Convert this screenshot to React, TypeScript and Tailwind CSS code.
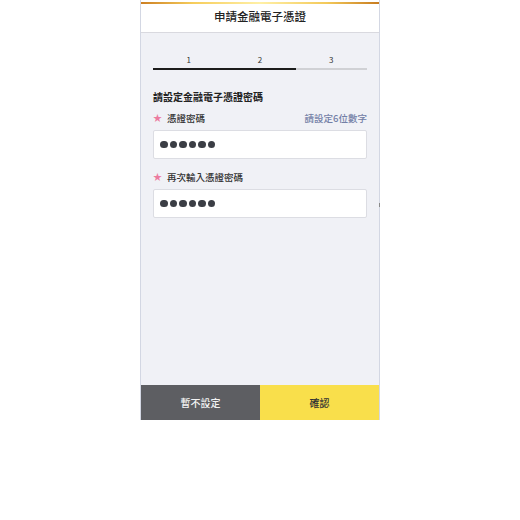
import React from 'react';

const font = { fontFamily: '"Noto Sans CJK TC", "Noto Sans", sans-serif' };

const Dots: React.FC = () => (
    <div className="flex gap-[2px]">
        {[0, 1, 2, 3, 4, 5].map((i) => (
            <span key={i} className="block w-[7.5px] h-[7.5px] rounded-full bg-[#3b3e45]" />
        ))}
    </div>
);

const PasswordField: React.FC<{ label: string; hint?: string; className?: string }> = ({ label, hint, className }) => (
    <div className={className}>
        <div className="flex items-center justify-between h-[14px] text-[9.5px] leading-[14px]">
            <div className="flex items-center gap-[5px] text-[#333] font-medium">
                <span className="text-[#ec7ba0] text-[9px]">★</span>
                <span>{label}</span>
            </div>
            {hint && <span className="text-[#7380a6] font-medium">{hint}</span>}
        </div>
        <div className="mt-[5px] h-[29px] bg-white border border-[#dcdde3] rounded-[2px] flex items-center pl-[6px]">
            <Dots />
        </div>
    </div>
);

export default function App() {
    return (
        <div className="w-[520px] h-[520px] bg-white flex justify-center" style={font}>
            <div className="relative w-[240px] h-[420px] flex flex-col bg-[#f0f1f6] border-x border-[#d3d7e3]">
                {/* header */}
                <div className="bg-white pt-[2px] border-b border-[#d9d9df]">
                    <div className="h-[2px] bg-[linear-gradient(90deg,#cc7f22,#f6cd5c_22%,#fff0a6_50%,#f3c95a_78%,#c77b1f)]" />
                    <div className="h-[28px] pb-[2px] flex items-center justify-center text-[11.5px] font-medium text-[#222]">
                        申請金融電子憑證
                    </div>
                </div>

                <div className="flex-1 px-[12px]">
                    {/* steps */}
                    <div className="pt-[22px]">
                        <div className="grid grid-cols-3 h-[10px] text-[8px] leading-[10px] text-[#333]">
                            <span className="text-center">1</span>
                            <span className="text-center">2</span>
                            <span className="text-center">3</span>
                        </div>
                        <div className="mt-[3px] h-[2px] flex bg-[#d0d1d5]">
                            <div className="w-2/3 bg-[#1c1c1c]" />
                        </div>
                    </div>

                    <div className="mt-[20px] h-[14px] leading-[14px] text-[10px] font-bold text-[#222]">
                        請設定金融電子憑證密碼
                    </div>

                    <PasswordField className="mt-[7px]" label="憑證密碼" hint="請設定6位數字" />
                    <PasswordField className="mt-[11px]" label="再次輸入憑證密碼" />
                </div>

                {/* small tick on the right edge */}
                <span className="absolute right-[-1px] top-[203px] w-[1px] h-[4px] bg-[#8a8a8a]" />

                {/* actions */}
                <div className="h-[35px] grid grid-cols-2 text-[10px] font-medium">
                    <button className="bg-[#5d5e62] text-[#f2f2f2]">暫不設定</button>
                    <button className="bg-[#f9df4b] text-[#333]">確認</button>
                </div>
            </div>
        </div>
    );
}
